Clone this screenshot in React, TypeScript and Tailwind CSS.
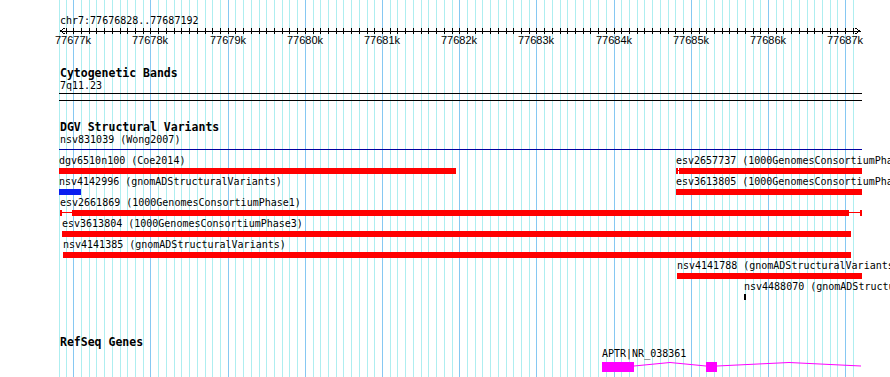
import React from "react";

const X0 = 73.28;
const STEP = 7.719;
const ticks = Array.from({ length: 103 }, (_, i) => i - 1).map((k) => ({
  k,
  x: Math.round(X0 + k * STEP),
}));
const majors = ticks.filter((t) => t.k >= 0 && t.k % 10 === 0);

type F = {
  x: number;
  end: number;
  label: string;
  color: string;
  thickStart?: number;
  thickEnd?: number;
  capLeft?: boolean;
  capRight?: boolean;
};

const rows: F[][] = [
  [
    { x: 59, end: 456, label: "dgv6510n100 (Coe2014)", color: "#ff0000" },
    {
      x: 676,
      end: 862,
      label: "esv2657737 (1000GenomesConsortiumPhase3)",
      color: "#ff0000",
      thickStart: 679,
      capLeft: true,
    },
  ],
  [
    { x: 59, end: 81, label: "nsv4142996 (gnomADStructuralVariants)", color: "#0a1ef0" },
    { x: 676, end: 862, label: "esv3613805 (1000GenomesConsortiumPhase3)", color: "#ff0000" },
  ],
  [
    {
      x: 60,
      end: 862,
      label: "esv2661869 (1000GenomesConsortiumPhase1)",
      color: "#ff0000",
      thickStart: 72,
      thickEnd: 849,
      capLeft: true,
      capRight: true,
    },
  ],
  [{ x: 62, end: 851, label: "esv3613804 (1000GenomesConsortiumPhase3)", color: "#ff0000" }],
  [{ x: 63, end: 851, label: "nsv4141385 (gnomADStructuralVariants)", color: "#ff0000" }],
  [{ x: 677, end: 862, label: "nsv4141788 (gnomADStructuralVariants)", color: "#ff0000" }],
  [{ x: 744, end: 746, label: "nsv4488070 (gnomADStructuralVariants)", color: "#000000" }],
];

function Grid() {
  return (
    <svg className="absolute left-0 top-0" width={890} height={377} shapeRendering="crispEdges">
      <rect x={59} y={0} width={1} height={377} fill="#aeeef0" />
      {ticks.map((t) => (
        <rect
          key={t.k}
          x={t.x}
          y={0}
          width={1}
          height={377}
          fill={t.k >= 0 && t.k % 10 === 0 ? "#86c8f2" : "#aeeef0"}
        />
      ))}
    </svg>
  );
}

function Ruler() {
  return (
    <svg className="block" width={890} height={7} shapeRendering="crispEdges">
      <rect x={60} y={4} width={801} height={1} fill="#000" />
      {ticks.map((t) => (
        <rect key={t.k} x={t.x} y={1} width={1} height={6} fill="#000" />
      ))}
      <polyline points="65,1 60,4 65,7" fill="none" stroke="#000" strokeWidth={1} />
      <polyline points="855,1 860,4 855,7" fill="none" stroke="#000" strokeWidth={1} />
    </svg>
  );
}

function Feature({ f }: { f: F }) {
  const w = f.end - f.x;
  const ts = (f.thickStart ?? f.x) - f.x;
  const te = (f.thickEnd ?? f.end) - f.x;
  return (
    <div className="absolute top-0" style={{ left: f.x }}>
      <div className="h-[12px] whitespace-nowrap text-[10px] leading-[12px]">{f.label}</div>
      <svg className="mt-px block" width={w} height={6} shapeRendering="crispEdges">
        {(ts > 0 || te < w) && <rect x={0} y={2} width={w} height={1} fill={f.color} />}
        <rect x={ts} y={0} width={te - ts} height={6} fill={f.color} />
        {f.capLeft && <rect x={0} y={0} width={2} height={6} fill={f.color} />}
        {f.capRight && <rect x={w - 2} y={0} width={2} height={6} fill={f.color} />}
      </svg>
    </div>
  );
}

export default function App() {
  return (
    <div className="relative h-[377px] w-[890px] overflow-hidden bg-white font-['DejaVu_Sans_Mono',monospace] text-black">
      <Grid />
      <div className="relative flex flex-col">
        <div className="pl-[60px] pt-[15px] text-[10px] leading-[12px]">chr7:77676828..77687192</div>
        <Ruler />
        <div className="relative h-[12px] font-['Liberation_Sans',sans-serif] text-[11px] leading-[12px]">
          {majors.map((t, i) => (
            <span key={t.k} className="absolute top-0 -translate-x-1/2" style={{ left: t.x }}>
              {`${77677 + i}k`}
            </span>
          ))}
        </div>
        <div className="mt-[22px] pl-[60px] text-[11.5px] font-bold leading-[11px]">Cytogenetic Bands</div>
        <div className="mt-px pl-[60px] text-[10px] leading-[12px]">7q11.23</div>
        <div className="ml-[59px] mt-px h-px w-[803px] bg-black" />
        <div className="ml-[59px] mt-[6px] h-px w-[803px] bg-black" />
        <div className="mt-[21px] pl-[60px] text-[11.5px] font-bold leading-[11px]">DGV Structural Variants</div>
        <div className="mt-px pl-[60px] text-[10px] leading-[12px]">nsv831039 (Wong2007)</div>
        <div className="ml-[59px] mt-[3px] h-px w-[803px] bg-[#0000a0]" />
        <div className="mt-[5px] flex flex-col">
          {rows.map((r, i) => (
            <div key={i} className="relative h-[21px]">
              {r.map((f) => (
                <Feature key={f.label} f={f} />
              ))}
            </div>
          ))}
        </div>
        <div className="mt-[35px] pl-[60px] text-[11.5px] font-bold leading-[11px]">RefSeq Genes</div>
        <div className="relative h-[26px]">
          <div className="absolute top-0 left-[602px]">
            <div className="h-[12px] whitespace-nowrap text-[10px] leading-[12px]">APTR|NR_038361</div>
            <svg className="mt-[2px] block" width={262} height={10}>
              <rect x={0} y={0} width={32} height={10} fill="#ff00ff" />
              <rect x={104} y={0} width={11} height={10} fill="#ff00ff" />
              <polyline points="32,4 68,0.5 104,4" fill="none" stroke="#ff00ff" strokeWidth={1} />
              <polyline points="115,4 187,0.5 259,4" fill="none" stroke="#ff00ff" strokeWidth={1} />
            </svg>
          </div>
        </div>
      </div>
    </div>
  );
}
